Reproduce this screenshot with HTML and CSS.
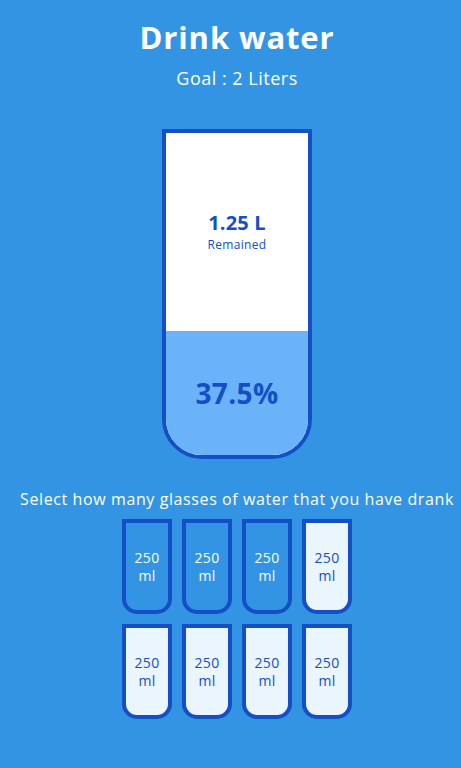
FILE: index.html
```html
<!DOCTYPE html>
<html lang="en">
<head>
<meta charset="UTF-8">
<title>Drink Water</title>
<link rel="stylesheet" href="styles.css">
</head>
<body>
  <h1 class="title">Drink water</h1>
  <h3 class="goal">Goal : 2 Liters</h3>

  <div class="cup">
    <div class="remained">
      <span class="liters">1.25 L</span>
      <small class="remained-label">Remained</small>
    </div>
    <div class="percentage" style="height: 123.75px">37.5%</div>
  </div>

  <p class="text">Select how many glasses of water that you have drank</p>

  <div class="cups">
    <div class="cup cup-small full">250 ml</div>
    <div class="cup cup-small full">250 ml</div>
    <div class="cup cup-small full">250 ml</div>
    <div class="cup cup-small">250 ml</div>
    <div class="cup cup-small">250 ml</div>
    <div class="cup cup-small">250 ml</div>
    <div class="cup cup-small">250 ml</div>
    <div class="cup cup-small">250 ml</div>
  </div>
</body>
</html>
```

FILE: styles.css
```css
* {
  box-sizing: border-box;
}

html, body {
  margin: 0;
  padding: 0;
}

body {
  background-color: #3494e4;
  color: #fff;
  font-family: "Open Sans", "DejaVu Sans", sans-serif;
  display: flex;
  flex-direction: column;
  align-items: center;
  min-height: 768px;
  padding-top: 17px;
  padding-left: 13px;
}

.title {
  margin: 0;
  font-size: 31px;
  line-height: 40px;
  font-weight: 700;
  letter-spacing: 0.9px;
}

.goal {
  font-weight: 400;
  font-size: 18px;
  line-height: 22px;
  margin: 10px 0 0;
  letter-spacing: 0.5px;
}

.cup {
  background-color: #fff;
  border: 4px solid #144fc6;
  color: #144fc6;
  border-radius: 0 0 40px 40px;
  height: 330px;
  width: 150px;
  margin: 40px 0 30px;
  display: flex;
  flex-direction: column;
  overflow: hidden;
}

.remained {
  flex: 1;
  display: flex;
  flex-direction: column;
  align-items: center;
  justify-content: center;
  text-align: center;
}

.liters {
  font-size: 20px;
  font-weight: 700;
  line-height: 20px;
  letter-spacing: 0.2px;
}

.remained-label {
  display: block;
  font-size: 12px;
  line-height: 12px;
  margin-top: 6px;
  letter-spacing: 0.3px;
}

.percentage {
  background-color: #6ab3f8;
  display: flex;
  align-items: center;
  justify-content: center;
  font-weight: 700;
  font-size: 28px;
  letter-spacing: 0.4px;
}

.text {
  text-align: center;
  margin: 0 0 5px;
  font-size: 16px;
  line-height: 20px;
  letter-spacing: 0.6px;
  white-space: nowrap;
}

.cups {
  display: flex;
  flex-wrap: wrap;
  justify-content: center;
  width: 280px;
}

.cup.cup-small {
  height: 95px;
  width: 50px;
  border-radius: 0 0 15px 15px;
  background-color: rgba(255, 255, 255, 0.9);
  font-size: 14px;
  line-height: 18px;
  align-items: center;
  justify-content: center;
  text-align: center;
  margin: 5px;
  letter-spacing: 0.3px;
}

.cup.cup-small.full {
  background-color: transparent;
  color: #fff;
}
```
